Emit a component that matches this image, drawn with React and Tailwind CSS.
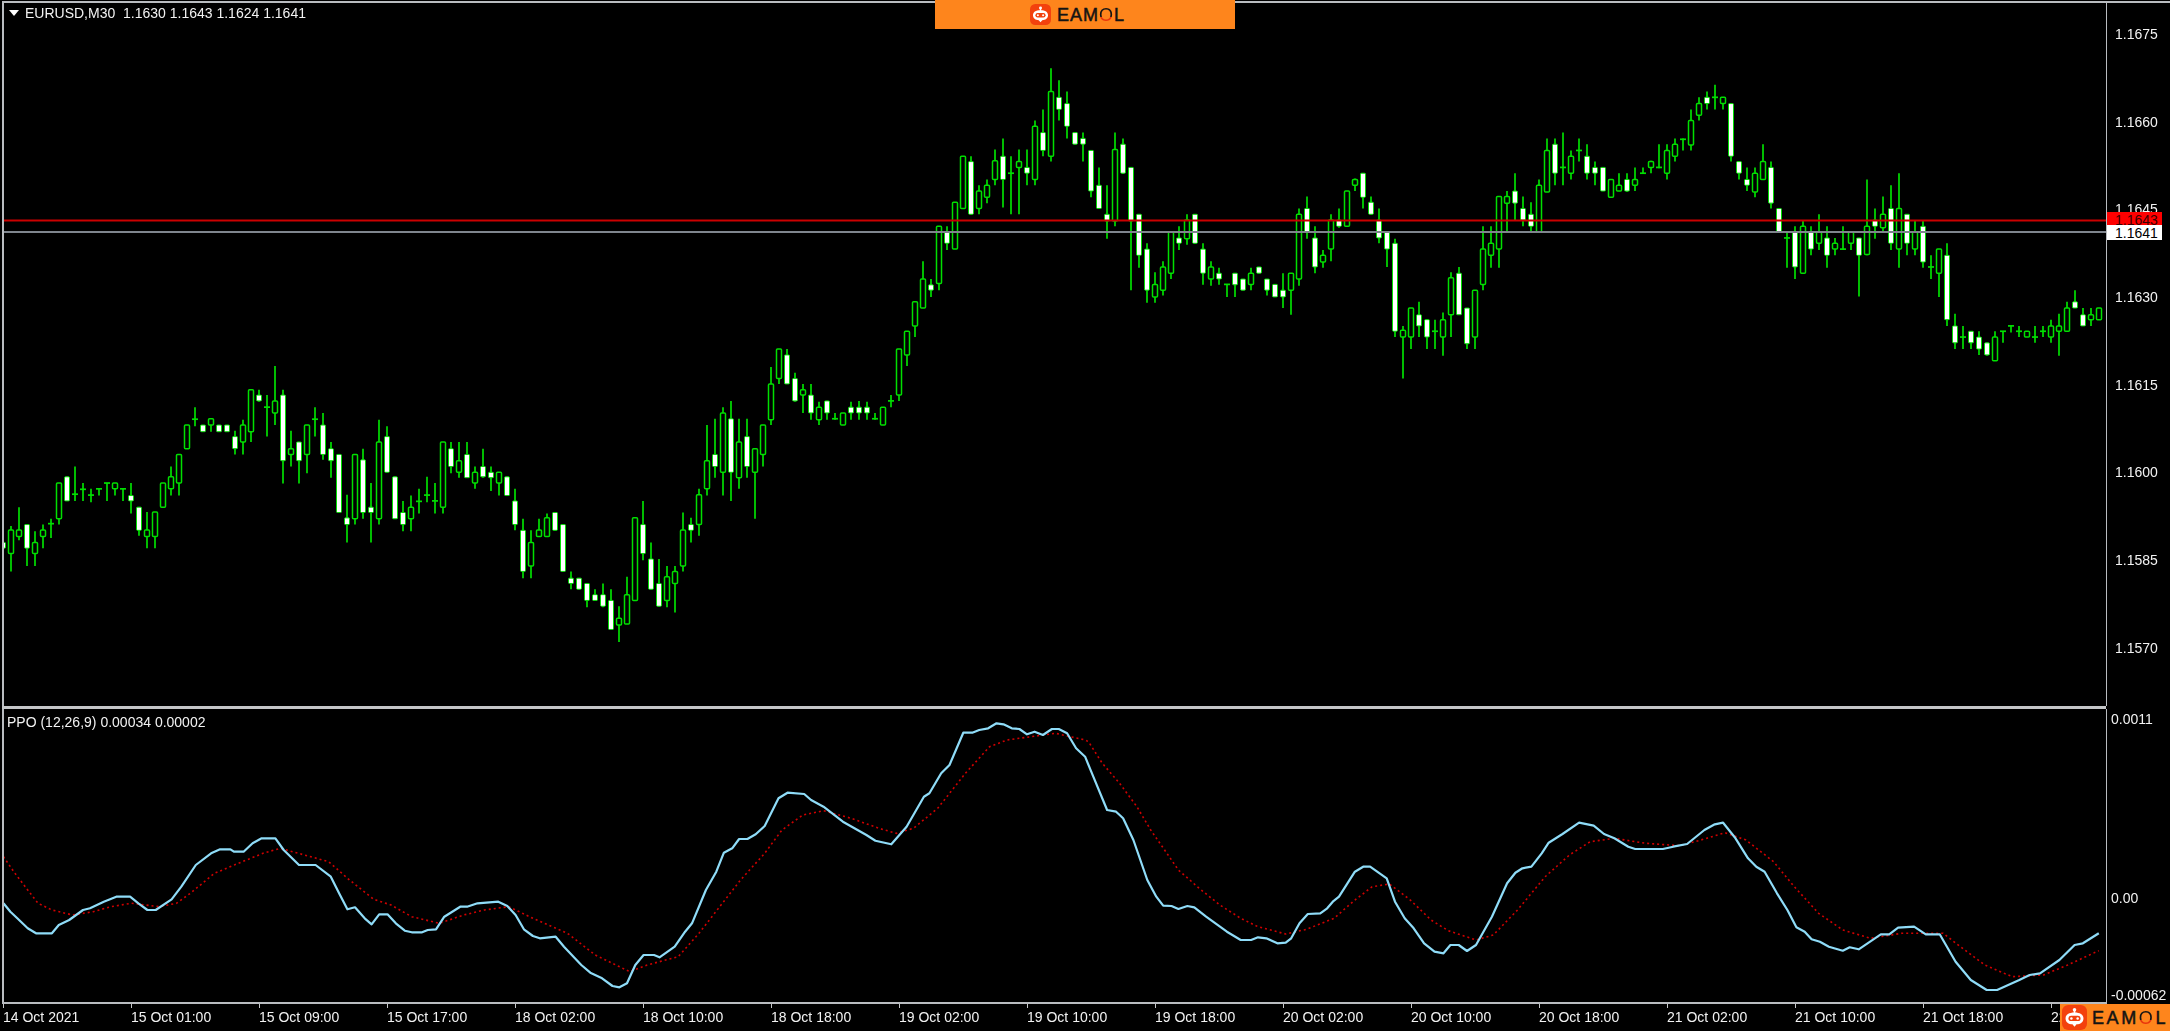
const G = 0, W = 1, D = 2;
// [x in source, kind, high, bodyTop, bodyBottom, low]; y values on a 2.24x scale, x on a 1.445x scale
const LEFT = [
[4,W,1175,1215,1228,1268],[16,G,1178,1187,1240,1280],[28,G,1136,1187,1202,1210],[39,W,1175,1175,1228,1268],[51,G,1190,1215,1240,1268],[62,G,1175,1187,1202,1228],[74,D,1162,1173,1173,1205],[86,G,1082,1082,1162,1175],[97,W,1068,1068,1122,1122],[109,D,1045,1107,1107,1122],[120,D,1082,1096,1096,1122],[132,D,1095,1109,1109,1125],[143,D,1095,1095,1095,1110],[155,D,1082,1082,1082,1122],[167,G,1082,1082,1095,1110],[178,D,1095,1095,1095,1122],[190,W,1082,1110,1122,1150],[201,W,1136,1136,1188,1200],[213,G,1147,1187,1202,1228],[225,G,1147,1147,1202,1228],[236,G,1082,1082,1136,1136],[248,G,1045,1068,1095,1110],[259,G,1018,1018,1082,1110],[271,G,952,952,1005,1005],[283,D,912,939,939,955],[294,W,952,952,967,967],[306,G,938,938,952,967],[317,W,952,952,967,967],[329,W,952,952,967,967],[340,W,965,978,1005,1018],[352,G,940,952,990,1018],[363,G,873,873,967,990],[375,W,873,885,898,900],[387,D,885,912,912,978],[398,G,820,898,925,952],[410,W,873,885,1032,1083],[421,G,965,1005,1018,1045],[433,W,990,990,1032,1083],[444,G,952,952,1018,1060],[456,D,912,939,939,978],[467,W,925,952,1018,1030],[479,W,990,1005,1032,1070],[490,W,1018,1018,1148,1148],[502,W,1108,1160,1175,1215],[514,G,1018,1018,1162,1175],[525,W,1005,1030,1148,1162],[537,W,1082,1136,1148,1215],[548,G,940,990,1162,1175],[560,W,955,978,1058,1058],[571,W,1068,1068,1162,1162],[583,W,1122,1148,1175,1190],[595,G,1110,1136,1162,1190],[606,D,1095,1123,1123,1150],[618,D,1068,1109,1109,1125],[629,D,1082,1122,1122,1150],[641,G,990,990,1136,1150],[652,W,990,1005,1045,1060],[664,G,990,1032,1058,1070],[675,W,990,1018,1070,1070],[687,G,1045,1058,1082,1095],[698,W,1005,1045,1068,1070],[710,W,1045,1058,1070,1100],[722,G,1058,1058,1082,1110],[733,W,1068,1068,1110,1110],[745,W,1095,1122,1175,1188],[756,W,1162,1188,1280,1295],[768,G,1188,1215,1268,1295],[779,G,1162,1187,1202,1202],[791,G,1150,1160,1202,1202],[803,W,1148,1148,1188,1188],[814,W,1175,1175,1280,1280],[826,W,1280,1295,1307,1320],[837,W,1295,1295,1320,1320],[849,W,1307,1307,1345,1360],[860,W,1320,1332,1345,1345],[872,W,1307,1332,1358,1360],[883,W,1320,1345,1410,1410],[895,G,1358,1385,1400,1438],[906,G,1292,1332,1398,1398],[918,G,1160,1160,1345,1345],[930,W,1122,1175,1240,1255],[941,W,1215,1252,1320,1320],[953,W,1252,1307,1358,1358],[964,G,1268,1292,1345,1360],[976,G,1268,1280,1307,1372],[987,G,1148,1187,1268,1280],[999,W,1160,1175,1188,1215],[1010,G,1095,1108,1175,1200],[1022,G,952,1032,1095,1110],[1034,W,938,1018,1045,1070],[1045,G,912,925,1058,1110],[1057,W,898,938,1058,1122],[1068,G,938,990,1070,1095],[1080,W,938,978,1045,1070],[1091,G,1005,1005,1058,1162],[1103,G,952,952,1018,1045],[1115,G,822,860,940,952],[1126,G,782,782,848,860],[1138,W,782,795,860,860],[1149,W,835,848,898,900],[1161,G,860,873,885,925],[1172,W,860,885,925,940],[1184,G,900,912,940,952],[1195,W,898,898,925,940],[1207,D,925,938,938,940],[1219,G,925,925,952,952],[1230,W,900,912,925,940],[1242,W,898,912,925,940],[1253,W,900,912,925,940],[1265,D,925,938,938,940],[1276,G,912,912,952,952],[1288,D,885,898,898,912],[1299,G,782,782,885,898],[1311,G,742,742,795,820],[1323,G,676,676,730,755],[1334,G,585,625,690,690],[1346,W,625,638,650,665],[1357,G,507,507,635,650],[1369,W,507,520,545,560],[1380,G,453,453,558,558],[1392,G,350,350,467,467],[1403,W,350,362,480,480],[1415,G,415,428,467,480],[1427,G,402,415,442,455],[1438,G,335,360,402,415],[1450,W,310,350,402,465],[1461,D,350,388,388,480],[1473,G,335,362,375,480],[1484,W,335,375,388,415],[1496,G,270,283,402,415],[1507,W,245,297,337,350],[1519,G,153,205,350,362],[1530,W,180,218,245,270],[1542,W,205,232,283,310],[1554,W,297,297,323,323],[1565,W,297,310,323,362],
];
const RIGHT = [
[9,W,337,337,428,442],[21,W,375,415,467,467],[32,W,415,480,495,535],[44,G,297,335,495,507],[55,W,310,323,388,390],[67,W,375,375,495,650],[78,W,480,480,572,600],[90,W,545,558,650,678],[102,G,610,637,665,678],[113,G,585,598,650,662],[125,G,520,520,612,625],[136,W,507,533,545,560],[148,G,480,493,535,548],[160,W,480,480,545,545],[171,W,545,558,612,638],[183,G,585,598,625,640],[194,W,600,612,625,638],[206,D,637,637,637,665],[217,W,612,612,638,665],[229,W,625,625,650,650],[240,G,600,612,637,650],[252,W,598,598,612,612],[264,W,625,625,650,662],[275,W,637,637,665,665],[287,W,612,650,665,690],[298,G,612,612,650,705],[310,G,467,480,625,640],[321,W,440,467,520,535],[333,W,507,533,598,612],[344,G,560,572,587,600],[356,G,480,493,558,585],[367,W,467,493,507,510],[379,G,428,428,507,507],[391,G,400,402,415,428],[402,W,388,388,442,467],[414,W,440,453,480,480],[425,W,467,493,533,545],[437,W,520,520,558,598],[448,W,535,545,742,755],[460,G,730,740,755,848],[472,G,690,690,755,782],[483,W,676,705,730,755],[495,W,716,716,755,782],[506,D,716,742,742,782],[518,G,700,716,755,797],[529,G,610,622,705,755],[541,W,598,612,705,705],[552,W,690,690,770,782],[564,G,650,650,755,782],[575,G,507,558,637,650],[587,G,507,545,572,600],[599,G,440,440,558,600],[610,G,428,440,455,520],[622,W,388,428,455,495],[633,W,440,467,493,507],[645,W,453,480,507,520],[656,G,402,415,520,520],[668,G,310,337,430,430],[679,W,310,323,388,415],[691,D,297,375,375,415],[703,G,337,350,388,402],[714,D,310,337,337,362],[726,W,323,350,388,402],[737,W,362,375,388,415],[749,W,375,375,428,428],[760,G,402,402,442,442],[772,G,388,415,428,428],[783,W,388,402,428,430],[795,G,375,402,415,428],[806,D,375,388,388,390],[818,G,360,362,375,388],[830,D,323,375,375,377],[841,G,323,337,388,402],[853,G,310,323,350,362],[864,D,310,312,312,337],[876,G,245,270,325,337],[888,G,218,232,258,270],[899,W,205,218,232,245],[911,D,190,218,218,245],[922,G,218,218,232,245],[934,W,232,232,350,362],[945,W,362,362,388,402],[957,W,375,402,415,428],[968,G,375,388,430,442],[980,G,323,362,402,402],[991,W,362,375,455,467],[1003,W,467,467,520,520],[1014,D,520,533,533,600],[1026,W,507,520,598,625],[1038,G,495,507,612,612],[1049,W,507,520,558,572],[1061,G,480,520,545,560],[1072,W,507,533,572,600],[1084,G,533,545,558,572],[1096,D,507,558,558,560],[1107,G,520,520,545,560],[1119,W,533,533,572,664],[1130,G,402,507,570,572],[1142,W,467,493,507,535],[1153,G,440,480,510,520],[1165,W,415,467,545,560],[1177,G,388,467,558,600],[1188,W,480,480,545,572],[1200,G,493,520,558,572],[1211,W,493,507,587,600],[1223,D,572,598,598,625],[1234,G,558,558,612,665],[1246,W,545,572,716,730],[1258,W,703,730,768,782],[1269,D,730,755,755,782],[1281,W,742,742,768,782],[1292,W,742,755,782,795],[1304,W,768,768,795,797],[1315,G,742,755,808,808],[1327,D,742,742,742,768],[1338,D,730,730,730,745],[1350,D,730,742,742,755],[1361,G,742,742,755,755],[1373,D,730,755,755,768],[1385,D,730,742,742,755],[1396,G,716,730,755,768],[1408,G,703,730,742,797],[1419,G,676,690,742,742],[1431,W,650,676,690,690],[1442,W,690,705,730,730],[1454,G,690,705,716,730],[1466,G,690,690,716,716],
];
const BLUE_L = [[5,640],[15,665],[25,685],[40,715],[52,730],[75,730],[85,705],[100,690],[120,660],[130,655],[150,635],[168,620],[188,620],[200,640],[213,660],[225,660],[248,628],[262,590],[283,525],[305,490],[318,478],[333,478],[338,485],[352,485],[365,460],[378,445],[398,445],[410,480],[432,525],[456,525],[478,560],[490,610],[502,658],[513,652],[527,685],[537,703],[548,673],[560,673],[572,700],[585,722],[595,727],[610,727],[618,720],[630,718],[642,680],[665,650],[675,650],[690,640],[720,635],[733,648],[745,675],[757,718],[770,738],[780,745],[803,740],[815,770],[840,825],[853,848],[870,865],[885,888],[895,892],[906,880],[918,825],[930,795],[945,795],[953,802],[975,770],[990,725],[1000,700],[1020,600],[1035,545],[1046,488],[1058,475],[1068,447],[1080,447],[1092,433],[1105,408],[1125,325],[1138,308],[1162,312],[1172,330],[1190,350],[1218,395],[1252,435],[1265,452],[1288,463],[1310,410],[1335,320],[1343,310],[1360,250],[1372,225],[1392,128],[1405,128],[1415,120],[1428,115],[1440,100],[1450,103],[1462,115],[1473,117],[1484,133],[1495,125],[1507,135],[1520,117],[1530,117],[1542,130],[1555,175],[1568,200]];
const BLUE_R = [[12,260],[32,360],[45,365],[55,385],[70,450],[90,570],[103,620],[113,647],[125,648],[135,657],[148,648],[158,652],[175,680],[205,725],[225,750],[240,750],[250,742],[262,745],[278,760],[290,758],[298,745],[310,700],[322,672],[340,670],[350,655],[358,635],[367,620],[390,545],[402,530],[412,530],[436,565],[448,635],[462,685],[475,715],[490,760],[505,785],[518,790],[528,765],[540,765],[552,783],[565,765],[588,680],[610,580],[622,548],[632,535],[645,530],[660,490],[670,458],[690,432],[714,398],[735,407],[750,432],[765,445],[785,470],[795,477],[835,477],[850,470],[870,462],[895,420],[910,403],[922,398],[940,445],[958,505],[970,530],[982,545],[1000,610],[1015,660],[1028,712],[1040,725],[1050,748],[1062,755],[1075,770],[1095,782],[1105,772],[1118,778],[1150,733],[1162,733],[1175,713],[1198,710],[1215,733],[1235,733],[1258,815],[1280,870],[1303,900],[1318,900],[1350,870],[1365,855],[1380,850],[1408,810],[1430,765],[1442,760],[1465,730]];
const RED_L = [[5,500],[20,545],[40,600],[55,640],[75,660],[105,675],[135,665],[160,650],[190,640],[230,650],[255,640],[275,610],[310,550],[350,515],[380,490],[405,475],[440,495],[475,515],[505,570],[540,628],[565,645],[595,680],[635,700],[670,675],[700,660],[735,650],[770,685],[820,730],[860,795],[910,845],[935,825],[980,800],[1010,730],[1040,650],[1070,570],[1105,490],[1130,420],[1160,375],[1190,362],[1230,385],[1270,415],[1295,430],[1320,415],[1355,355],[1395,250],[1430,170],[1455,150],[1490,140],[1525,130],[1568,150]];
const RED_R = [[5,155],[25,220],[50,280],[75,350],[95,420],[115,480],[135,540],[165,595],[195,645],[225,685],[250,710],[290,732],[320,718],[360,685],[390,630],[415,590],[440,582],[470,630],[500,690],[525,722],[565,750],[590,735],[625,660],[665,560],[700,495],[730,455],[765,445],[810,460],[860,467],[890,450],[925,428],[955,450],[995,515],[1025,590],[1060,670],[1095,720],[1135,745],[1180,730],[1240,730],[1265,770],[1300,825],[1340,860],[1385,855],[1420,825],[1465,782]];

const candleX = (zx, off) => Math.round((zx / 1.445 + off - 3) / 8) * 8 + 3;
const CANDLES = [
  ...LEFT.map((c) => [candleX(c[0], 0), ...c.slice(1)]),
  ...RIGHT.map((c) => [candleX(c[0], 1085), ...c.slice(1)]),
];
const toPath = (l, r) =>
  "M" +
  [
    ...l.map(([x, y]) => `${(x / 1.445).toFixed(1)} ${(690 + y / 3).toFixed(1)}`),
    ...r.map(([x, y]) => `${(1085 + x / 1.445).toFixed(1)} ${(690 + y / 3).toFixed(1)}`),
  ].join("L");

const PRICES = ["1.1675", "1.1660", "1.1645", "1.1630", "1.1615", "1.1600", "1.1585", "1.1570"];
const TIMES = ["14 Oct 2021", "15 Oct 01:00", "15 Oct 09:00", "15 Oct 17:00", "18 Oct 02:00", "18 Oct 10:00", "18 Oct 18:00", "19 Oct 02:00", "19 Oct 10:00", "19 Oct 18:00", "20 Oct 02:00", "20 Oct 10:00", "20 Oct 18:00", "21 Oct 02:00", "21 Oct 10:00", "21 Oct 18:00", "22 Oct 02:00"];

function Candles() {
  const green = "#00e000";
  return (
    <svg className="block [filter:blur(0.35px)]" width="2102" height="703" viewBox="4 3 2102 703">
      {CANDLES.map(([x, kind, hi, top, bot, lo], i) => {
        const y = (v) => v / 2.24;
        return (
          <g key={i}>
            <line x1={x} x2={x} y1={y(hi)} y2={y(lo)} stroke={green} strokeWidth="1.7" />
            {kind === D ? (
              <line x1={x - 3} x2={x + 3} y1={y(top)} y2={y(top)} stroke={green} strokeWidth="1.7" />
            ) : (
              <rect
                x={x - 2.5}
                y={y(top)}
                width="5"
                height={Math.max(y(bot) - y(top), 2)}
                rx="1"
                fill={kind === W ? "#ffffff" : "#000000"}
                stroke={green}
                strokeWidth={kind === W ? 1 : 1.5}
              />
            )}
          </g>
        );
      })}
      <line x1="4" x2="2106" y1="220.5" y2="220.5" stroke="#cc0000" strokeWidth="2" />
      <line x1="4" x2="2106" y1="232" y2="232" stroke="#7f858d" strokeWidth="2" />
    </svg>
  );
}

function Oscillator() {
  return (
    <svg className="block [filter:blur(0.25px)]" width="2102" height="293" viewBox="4 709 2102 293">
      <path d={toPath(RED_L, RED_R)} fill="none" stroke="#d00000" strokeWidth="1.6" strokeDasharray="2 3" />
      <path d={toPath(BLUE_L, BLUE_R)} fill="none" stroke="#8fdcf8" strokeWidth="2.2" strokeLinejoin="round" />
    </svg>
  );
}

function Robot({ size }) {
  return (
    <svg width={size} height={size} viewBox="0 0 24 24" className="shrink-0">
      <rect width="24" height="24" rx="6" fill="#f3410d" />
      <circle cx="12" cy="4.6" r="1.7" fill="#fff" />
      <rect x="11.2" y="5" width="1.6" height="3" fill="#fff" />
      <path d="M12 7.2c5.6 0 8.6 2.2 8.6 5.7s-3 5.6-6.6 5.6l-2 2.4-2-2.4c-3.6 0-6.6-2.1-6.6-5.6s3-5.7 8.6-5.7z" fill="#fff" />
      <rect x="6.2" y="10.4" width="11.6" height="5" rx="2.5" fill="#f3410d" />
      <circle cx="9" cy="12.9" r="1.2" fill="#fff" />
      <circle cx="15" cy="12.9" r="1.2" fill="#fff" />
    </svg>
  );
}

function Wordmark({ className }) {
  return (
    <span className={`font-['Liberation_Sans',sans-serif] text-[18px] leading-none text-[#141414] [-webkit-text-stroke:0.5px_#141414] ${className}`}>
      EAM
      <span className="bg-linear-to-b from-[#141414] from-60% to-[#e8340c] to-60% bg-clip-text text-transparent [-webkit-text-stroke:0]">O</span>
      L
    </span>
  );
}

export default function App() {
  return (
    <div className="relative flex h-[1031px] w-[2170px] flex-col overflow-hidden bg-black pl-[2px] pt-[1px] font-['Liberation_Sans',sans-serif] text-[14px] leading-4 text-[#f2f2f2]">
      {/* price chart row */}
      <div className="flex h-[705px] shrink-0">
        <div className="relative w-[2104px] shrink-0 border-l-2 border-t-2 border-[#b9bcc0]">
          <Candles />
          <div className="absolute left-[5px] top-[2px] flex items-center gap-[6px] [filter:blur(0.4px)]">
            <span className="h-0 w-0 border-x-[5px] border-t-[6px] border-x-transparent border-t-white" />
            <span className="whitespace-pre">EURUSD,M30  1.1630 1.1643 1.1624 1.1641</span>
          </div>
        </div>
        <div className="flex flex-1 flex-col gap-[71.7px] border-l border-t-2 border-[#b9bcc0] pl-[8px] pt-[23px] [filter:blur(0.4px)]">
          {PRICES.map((p) => (
            <span key={p}>{p}</span>
          ))}
        </div>
      </div>

      {/* separator */}
      <div className="h-[3px] w-[2104px] shrink-0 bg-[#c4c6c8]" />

      {/* oscillator row */}
      <div className="flex h-[295px] shrink-0">
        <div className="relative w-[2104px] shrink-0 border-b-2 border-l-2 border-[#b9bcc0]">
          <Oscillator />
          <span className="absolute left-[3px] top-[5px] [filter:blur(0.4px)]">PPO (12,26,9) 0.00034 0.00002</span>
        </div>
        <div className="flex flex-1 flex-col border-l border-[#b9bcc0] pl-[4px] pt-[2px] [filter:blur(0.4px)]">
          <span>0.0011</span>
          <span className="mt-[163px]">0.00</span>
          <span className="mt-[81px]">-0.00062</span>
        </div>
      </div>

      {/* time axis */}
      <div className="flex min-h-0 flex-1 pl-[1px] [filter:blur(0.4px)]">
        {TIMES.map((t) => (
          <div key={t} className="w-[128px] shrink-0 whitespace-nowrap">
            <div className="h-[4px] w-px bg-[#c4c6c8]" />
            <div className="mt-[1px]">{t}</div>
          </div>
        ))}
      </div>

      {/* logo overlays */}
      <div className="absolute left-[935px] top-0 flex h-[29px] w-[300px] items-center gap-[6px] bg-[#fe851c] pl-[95px]">
        <Robot size={21} />
        <Wordmark className="tracking-[1px]" />
      </div>
      <div className="absolute bottom-0 right-0 flex h-[27px] w-[110px] items-center gap-[5px] bg-[#fe851c] pl-[2px]">
        <Robot size={25} />
        <Wordmark className="tracking-[2.6px]" />
      </div>

      {/* current-price tags */}
      <div className="absolute left-[2107px] top-[212px] h-[13px] w-[55px] overflow-hidden bg-[#ff0000] pl-[8px] text-[#3a0000]">1.1643</div>
      <div className="absolute left-[2107px] top-[225px] h-[15px] w-[55px] bg-white pl-[8px] text-black">1.1641</div>
    </div>
  );
}
